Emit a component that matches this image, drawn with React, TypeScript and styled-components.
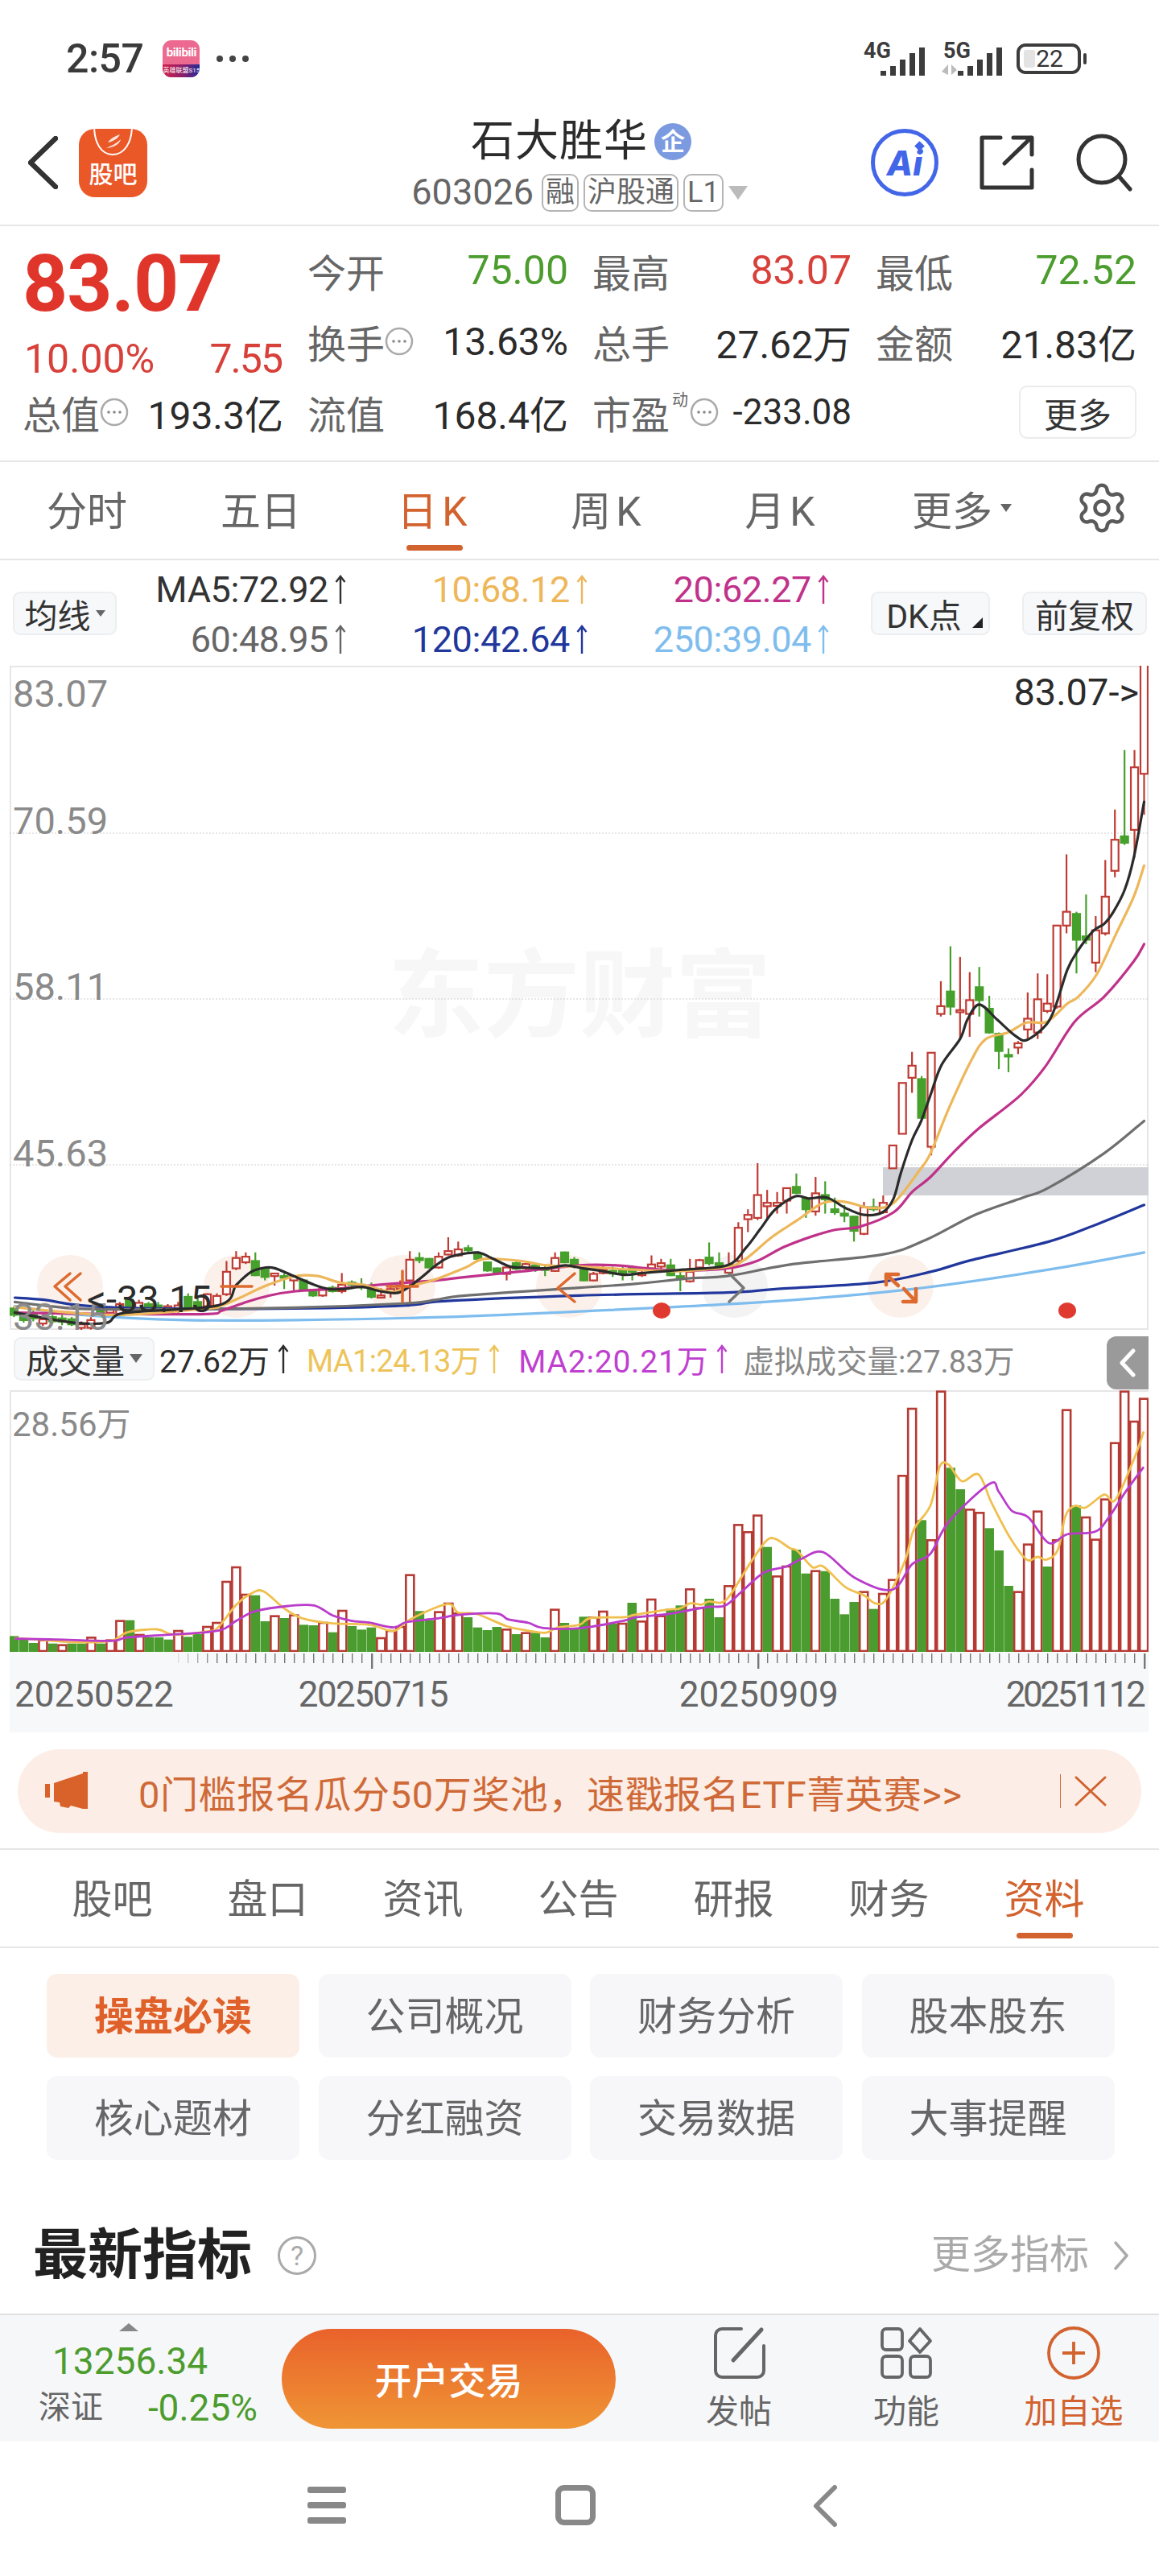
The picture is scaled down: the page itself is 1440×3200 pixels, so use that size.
import React from 'react';
import styled, { createGlobalStyle } from 'styled-components';
import { Settings } from 'lucide-react';

const RED = '#d8403a';
const GREEN = '#4c9c2e';
const ORANGE = '#d2622e';
const CANDLE_RED = '#bf3b33';
const CANDLE_GREEN = '#46a02c';

type Point = [number, number];
// x, body top, body bottom, wick top, wick bottom, up day
type Candle = [number, number, number, number, number, boolean];

const leftCandles: Candle[] = [
  [38, 1485, 1500, 1480, 1505, false], [64, 1500, 1512, 1495, 1518, false], [90, 1498, 1508, 1490, 1515, false],
  [116, 1510, 1520, 1500, 1526, true], [142, 1505, 1515, 1500, 1520, false], [168, 1508, 1516, 1500, 1524, false],
  [194, 1510, 1522, 1505, 1526, false], [220, 1522, 1530, 1515, 1535, true], [246, 1512, 1530, 1505, 1534, true],
  [272, 1490, 1500, 1485, 1505, false], [298, 1488, 1495, 1480, 1505, true], [324, 1475, 1500, 1470, 1505, true],
  [350, 1465, 1480, 1460, 1485, false], [376, 1472, 1490, 1465, 1495, true], [402, 1475, 1485, 1470, 1490, false],
  [428, 1478, 1488, 1470, 1492, false], [454, 1480, 1490, 1475, 1495, true], [482, 1478, 1490, 1470, 1495, true],
  [509, 1458, 1482, 1450, 1488, false], [535, 1470, 1482, 1462, 1486, false], [561, 1452, 1480, 1450, 1484, true],
  [587, 1456, 1478, 1450, 1482, true], [613, 1400, 1452, 1375, 1456, true], [639, 1368, 1392, 1352, 1396, true],
  [665, 1365, 1378, 1355, 1382, true], [691, 1375, 1408, 1355, 1410, false], [717, 1395, 1412, 1392, 1420, false],
  [743, 1404, 1410, 1404, 1432, true], [769, 1410, 1414, 1404, 1440, false], [795, 1410, 1420, 1408, 1444, true],
  [821, 1420, 1440, 1418, 1442, false], [847, 1442, 1455, 1440, 1458, false], [873, 1440, 1455, 1438, 1458, true],
  [900, 1437, 1445, 1432, 1448, false], [925, 1430, 1445, 1403, 1450, true], [952, 1425, 1430, 1420, 1440, false],
  [978, 1430, 1436, 1415, 1442, false], [1005, 1442, 1458, 1425, 1462, false], [1031, 1455, 1460, 1438, 1462, true],
  [1057, 1440, 1448, 1430, 1460, true], [1083, 1432, 1440, 1420, 1446, true], [1109, 1372, 1420, 1352, 1470, true],
  [1135, 1368, 1373, 1355, 1380, false], [1161, 1370, 1390, 1368, 1392, false], [1187, 1365, 1390, 1355, 1393, true],
  [1213, 1352, 1360, 1320, 1362, true], [1240, 1348, 1362, 1330, 1365, true], [1267, 1345, 1350, 1338, 1358, false],
  [1293, 1358, 1370, 1352, 1376, false], [1319, 1378, 1397, 1376, 1400, false], [1345, 1392, 1402, 1390, 1405, false],
  [1371, 1390, 1405, 1388, 1420, true], [1397, 1380, 1393, 1375, 1396, false], [1423, 1382, 1392, 1380, 1396, true],
  [1449, 1385, 1392, 1382, 1400, false], [1475, 1392, 1396, 1384, 1410, false], [1502, 1368, 1398, 1355, 1400, true],
  [1528, 1355, 1378, 1353, 1380, false], [1554, 1372, 1385, 1366, 1392, false],
];

const rightCandles: Candle[] = [
  [12, 1395, 1420, 1392, 1422, false], [38, 1405, 1420, 1400, 1422, true], [64, 1395, 1403, 1385, 1406, true],
  [90, 1398, 1404, 1388, 1412, false], [117, 1395, 1402, 1384, 1420, false], [143, 1390, 1400, 1385, 1420, false],
  [169, 1402, 1408, 1392, 1412, true], [195, 1383, 1392, 1362, 1400, true], [221, 1380, 1388, 1370, 1395, true],
  [247, 1385, 1408, 1370, 1410, false], [273, 1410, 1414, 1400, 1445, false], [299, 1400, 1422, 1370, 1425, true],
  [325, 1373, 1390, 1370, 1395, true], [351, 1367, 1380, 1332, 1385, false], [378, 1380, 1390, 1355, 1392, false],
  [404, 1390, 1402, 1355, 1405, true], [430, 1298, 1375, 1285, 1378, true], [456, 1268, 1278, 1255, 1308, true],
  [482, 1222, 1275, 1148, 1280, true], [508, 1240, 1248, 1210, 1280, true], [535, 1240, 1247, 1215, 1265, true],
  [561, 1206, 1235, 1206, 1265, true], [587, 1203, 1217, 1172, 1220, false], [613, 1230, 1255, 1225, 1275, false],
  [639, 1218, 1260, 1180, 1270, true], [665, 1222, 1232, 1190, 1265, false], [691, 1255, 1262, 1228, 1268, false],
  [717, 1265, 1270, 1245, 1285, false], [743, 1272, 1305, 1270, 1330, false], [770, 1250, 1312, 1238, 1315, true],
  [796, 1250, 1255, 1230, 1260, false], [822, 1240, 1262, 1223, 1265, true], [848, 1107, 1160, 1107, 1160, true],
  [874, 962, 1080, 962, 1080, true], [900, 922, 950, 890, 985, true], [926, 953, 1043, 946, 1045, false],
  [952, 892, 1110, 892, 1130, true], [978, 784, 802, 726, 808, true], [1004, 750, 785, 645, 805, false],
  [1030, 793, 798, 670, 860, true], [1056, 770, 802, 705, 855, true], [1082, 740, 770, 693, 808, false],
  [1109, 790, 845, 760, 848, false], [1135, 848, 888, 845, 930, false], [1161, 897, 900, 882, 937, false],
  [1187, 870, 880, 865, 895, true], [1213, 813, 838, 752, 862, true], [1240, 768, 845, 708, 860, true],
  [1266, 778, 795, 710, 800, true], [1292, 597, 785, 597, 790, true], [1318, 565, 597, 432, 615, true],
  [1345, 570, 630, 565, 708, false], [1371, 622, 630, 525, 640, false], [1397, 608, 683, 575, 705, true],
  [1423, 530, 615, 445, 620, true], [1449, 398, 470, 328, 485, true], [1475, 390, 405, 190, 410, false],
  [1502, 230, 375, 190, 440, true], [1528, -10, 245, -10, 340, true],
];

const candles: Candle[] = [
  ...leftCandles,
  ...rightCandles.map(([x, ...rest]) => [x + 1568, ...rest] as Candle),
];

const shift = (points: Point[]): Point[] => points.map(([x, y]) => [x + 1568, y]);

const maLines: { color: string; points: Point[] }[] = [
  {
    color: '#7ebdee',
    points: [[40, 1480], [220, 1500], [500, 1512], [800, 1512], [1200, 1505], [1568, 1492],
      ...shift([[500, 1470], [900, 1440], [1270, 1395], [1528, 1355]])],
  },
  {
    color: '#21379c',
    points: [[40, 1460], [120, 1465], [220, 1478], [400, 1485], [800, 1485], [1100, 1478], [1200, 1468], [1568, 1455],
      ...shift([[400, 1448], [530, 1440], [800, 1425], [950, 1400], [1060, 1373], [1270, 1330], [1400, 1290], [1528, 1245]])],
  },
  {
    color: '#6f6f6f',
    points: [[40, 1470], [200, 1485], [400, 1487], [800, 1483], [1100, 1473], [1180, 1465], [1260, 1455], [1568, 1437],
      ...shift([[150, 1428], [300, 1415], [400, 1410], [580, 1382], [820, 1360], [940, 1325], [1070, 1268], [1200, 1228], [1270, 1205], [1420, 1125], [1528, 1050]])],
  },
  {
    color: '#c0328a',
    points: [[40, 1495], [300, 1498], [560, 1498], [600, 1490], [660, 1472], [730, 1455], [800, 1445], [900, 1440], [1000, 1432], [1100, 1425], [1180, 1420], [1260, 1412], [1400, 1400], [1568, 1385],
      ...shift([[100, 1385], [160, 1390], [270, 1397], [400, 1392], [480, 1375], [560, 1340], [680, 1305], [760, 1295], [850, 1262], [900, 1215], [950, 1180], [1010, 1125], [1080, 1068], [1190, 993], [1260, 925], [1340, 820], [1420, 762], [1500, 680], [1528, 640]])],
  },
  {
    color: '#edb75a',
    points: [[40, 1482], [300, 1500], [560, 1485], [600, 1478], [650, 1460], [720, 1432], [800, 1410], [860, 1410], [920, 1425], [980, 1430], [1060, 1447], [1100, 1435], [1170, 1420], [1260, 1390], [1310, 1370], [1410, 1375], [1480, 1385], [1568, 1388],
      ...shift([[100, 1393], [200, 1397], [280, 1398], [400, 1388], [450, 1370], [520, 1320], [590, 1280], [660, 1240], [720, 1238], [790, 1252], [850, 1240], [920, 1165], [950, 1125], [1000, 1020], [1060, 910], [1100, 860], [1160, 845], [1210, 822], [1265, 820], [1320, 778], [1350, 762], [1400, 710], [1450, 620], [1500, 530], [1528, 458]])],
  },
  {
    color: '#2b2b2b',
    points: [[40, 1495], [200, 1518], [290, 1518], [340, 1495], [590, 1478], [640, 1430], [680, 1400], [720, 1390], [745, 1392], [790, 1408], [850, 1430], [890, 1440], [930, 1440], [980, 1435], [1030, 1445], [1080, 1448], [1130, 1420], [1180, 1385], [1220, 1365], [1290, 1355], [1330, 1368], [1380, 1388], [1420, 1390], [1480, 1392], [1530, 1385],
      ...shift([[10, 1392], [60, 1398], [120, 1407], [170, 1403], [240, 1398], [280, 1395], [400, 1385], [450, 1345], [490, 1300], [530, 1255], [585, 1225], [620, 1230], [670, 1228], [720, 1252], [770, 1268], [820, 1262], [850, 1230], [870, 1170], [900, 1095], [925, 1050], [950, 990], [980, 920], [1030, 860], [1050, 815], [1082, 780], [1130, 815], [1180, 853], [1212, 862], [1265, 825], [1290, 780], [1320, 700], [1345, 660], [1390, 610], [1420, 593], [1445, 565], [1475, 515], [1500, 440], [1528, 310]])],
  },
];

// top of each volume bar, oldest first; g = down day, r = up day
const volumeTops: [number, 'r' | 'g'][] = [
  [1117, 'g'], [1130, 'g'], [1143, 'g'], [1130, 'r'], [1145, 'g'], [1148, 'r'], [1145, 'g'], [1145, 'g'], [1120, 'r'], [1145, 'g'],
  [1130, 'r'], [1058, 'r'], [1058, 'g'], [1110, 'r'], [1122, 'g'], [1122, 'g'], [1130, 'g'], [1095, 'r'], [1120, 'g'], [1110, 'g'],
  [1080, 'r'], [1065, 'r'], [912, 'r'], [858, 'r'], [960, 'r'], [965, 'g'], [1062, 'g'], [1040, 'r'], [1050, 'g'], [1037, 'r'],
  [1075, 'g'], [1077, 'g'], [1065, 'r'], [1103, 'g'], [1020, 'r'], [1080, 'g'], [1093, 'g'], [1085, 'g'], [1122, 'r'], [1095, 'r'],
  [1080, 'r'], [887, 'r'], [1024, 'g'], [1058, 'g'], [1025, 'r'], [993, 'r'], [1030, 'r'], [1047, 'g'], [1085, 'g'], [1095, 'g'],
  [1083, 'g'], [1090, 'r'], [1110, 'g'], [1103, 'r'], [1105, 'g'], [1122, 'g'], [1016, 'r'], [1068, 'g'], [1090, 'g'],
  [1045, 'g'], [1045, 'r'], [1023, 'r'], [1070, 'g'], [1068, 'r'], [993, 'g'], [1060, 'r'], [978, 'r'], [1040, 'r'], [1015, 'g'],
  [1003, 'g'], [940, 'r'], [1010, 'r'], [978, 'g'], [1047, 'g'], [928, 'r'], [700, 'r'], [727, 'r'], [665, 'r'], [785, 'g'],
  [892, 'r'], [855, 'r'], [795, 'g'], [884, 'g'], [872, 'r'], [875, 'g'], [978, 'g'], [1036, 'g'], [990, 'g'], [950, 'r'],
  [1016, 'g'], [957, 'r'], [905, 'r'], [517, 'r'], [267, 'r'], [685, 'g'], [757, 'r'], [203, 'r'], [490, 'g'], [570, 'g'],
  [643, 'r'], [655, 'r'], [715, 'g'], [798, 'g'], [930, 'g'], [950, 'r'], [773, 'r'], [650, 'r'], [858, 'g'], [757, 'r'],
  [272, 'r'], [630, 'g'], [672, 'r'], [755, 'r'], [605, 'r'], [395, 'r'], [203, 'r'], [315, 'r'], [230, 'r'],
];

const volumeMa1: Point[] = [[40, 1125], [100, 1130], [200, 1140], [300, 1135], [345, 1103], [425, 1092], [470, 1112], [560, 1100], [590, 1085], [640, 1000], [685, 955], [715, 952], [770, 1015], [820, 1052], [900, 1070], [1000, 1075], [1065, 1098], [1110, 1055], [1210, 998], [1240, 1030], [1290, 1035], [1370, 1080], [1420, 1095], [1475, 1105], [1510, 1085], [1568, 1075],
  ...shift([[30, 1050], [120, 1047], [150, 1038], [240, 1018], [270, 1015], [300, 995], [330, 1000], [350, 988], [385, 992], [410, 960], [460, 850], [505, 763], [530, 755], [570, 790], [590, 800], [630, 860], [660, 858], [720, 935], [770, 965], [800, 995], [830, 980], [880, 840], [905, 720], [950, 630], [975, 485], [1000, 480], [1035, 540], [1080, 515], [1115, 620], [1165, 750], [1210, 832], [1240, 822], [1265, 832], [1295, 795], [1315, 670], [1340, 632], [1370, 638], [1420, 590], [1450, 610], [1500, 460], [1527, 355]])];

const volumeMa2: Point[] = [[40, 1127], [150, 1130], [300, 1135], [345, 1122], [460, 1112], [590, 1097], [640, 1060], [690, 1025], [780, 1005], [850, 1003], [900, 1040], [950, 1060], [1000, 1067], [1065, 1085], [1100, 1065], [1180, 1052], [1250, 1037], [1345, 1033], [1375, 1055], [1430, 1068], [1470, 1087], [1568, 1088],
  ...shift([[120, 1060], [150, 1048], [240, 1035], [300, 1020], [350, 1008], [395, 1003], [440, 950], [500, 880], [560, 858], [600, 830], [660, 805], [745, 900], [845, 945], [900, 850], [950, 810], [1000, 690], [1110, 550], [1135, 580], [1170, 650], [1215, 675], [1270, 770], [1320, 738], [1395, 728], [1430, 680], [1480, 575], [1527, 487]])];

// samples were read at 2.178x / 1.867x around y=830, the panel starts at (12, 827)
const kx = (z: number) => z / 2.178 - 12;
const ky = (z: number) => z / 1.867 + 3;
const vx = (z: number) => z / 2.178 - 12;
const vy = (z: number) => z / 3 - 67;

function smoothPath(points: Point[]) {
  let d = `M${points[0][0].toFixed(1)} ${points[0][1].toFixed(1)}`;
  for (let i = 0; i < points.length - 1; i++) {
    const p0 = points[Math.max(i - 1, 0)];
    const p1 = points[i];
    const p2 = points[i + 1];
    const p3 = points[Math.min(i + 2, points.length - 1)];
    const c1x = p1[0] + (p2[0] - p0[0]) / 6;
    const c1y = p1[1] + (p2[1] - p0[1]) / 6;
    const c2x = p2[0] - (p3[0] - p1[0]) / 6;
    const c2y = p2[1] - (p3[1] - p1[1]) / 6;
    d += ` C${c1x.toFixed(1)} ${c1y.toFixed(1)} ${c2x.toFixed(1)} ${c2y.toFixed(1)} ${p2[0].toFixed(1)} ${p2[1].toFixed(1)}`;
  }
  return d;
}

const priceLabels: [string, number][] = [['83.07', 10], ['70.59', 168], ['58.11', 374], ['45.63', 581]];
const chartButtons: [number, string][] = [[75, '#fbf0ea'], [282, '#fbf0ea'], [488, '#fbf0ea'], [695, '#fbf0ea'], [901, '#f3f3f4'], [1107, '#fbf0ea']];
const quoteTabs = ['股吧', '盘口', '资讯', '公告', '研报', '财务', '资料'];
const profileLinks = ['操盘必读', '公司概况', '财务分析', '股本股东', '核心题材', '分红融资', '交易数据', '大事提醒'];
const periodTabs = ['分时', '五日', '日K', '周K', '月K'];

const GlobalStyle = createGlobalStyle`
  html, body {
    margin: 0;
    padding: 0;
    background: #fff;
  }

  * {
    box-sizing: border-box;
  }

  body {
    font-family: Roboto, "Noto Sans CJK SC", sans-serif;
    color: #333;
  }
`;

const Page = styled.div`
  width: 1440px;
  height: 3200px;
  overflow: hidden;
  background: #fff;
`;

const StatusBar = styled.div`
  height: 140px;
  padding: 6px 97px 0 82px;
  display: flex;
  align-items: center;
  justify-content: space-between;
`;

const StatusLeft = styled.div`
  display: flex;
  align-items: center;
`;

const Time = styled.span`
  font-size: 50px;
  font-weight: 500;
  color: #3a3a3a;
  letter-spacing: -0.5px;
`;

const BiliIcon = styled.div`
  width: 46px;
  height: 46px;
  margin-left: 24px;
  border-radius: 11px;
  overflow: hidden;
  display: flex;
  flex-direction: column;
  background: #ec6a90;
`;

const BiliTop = styled.span`
  height: 30px;
  display: flex;
  align-items: center;
  justify-content: center;
  font-size: 15px;
  font-weight: 700;
  color: #fff;
  letter-spacing: -0.4px;
`;

const BiliBottom = styled.span`
  flex: 1;
  display: flex;
  align-items: center;
  justify-content: center;
  font-size: 8px;
  line-height: 1;
  white-space: nowrap;
  color: #fff;
  background: linear-gradient(90deg, #d3224a, #8a1f6b 55%, #1f2a9a);
`;

const Dots = styled.div`
  margin-left: 21px;
  display: flex;
  gap: 8px;
`;

const Dot = styled.i`
  width: 8px;
  height: 8px;
  border-radius: 50%;
  background: #444;
`;

const StatusRight = styled.div`
  display: flex;
  align-items: center;
  gap: 18px;
`;

const SignalWrap = styled.div`
  position: relative;
  width: 78px;
  height: 42px;
`;

const SignalLabel = styled.span<{ $left: number }>`
  position: absolute;
  left: ${(p) => p.$left}px;
  top: -5px;
  font-size: 27px;
  line-height: 32px;
  font-weight: 700;
  color: #3c3c3c;
`;

const Battery = styled.div`
  position: relative;
  width: 80px;
  height: 38px;
  border: 4px solid #3c3c3c;
  border-radius: 11px;
  display: flex;
  align-items: center;
  justify-content: center;
  padding-left: 2px;
  font-size: 30px;
  line-height: 1;
  color: #333;
  margin-left: -2px;

  &::before {
    content: '';
    position: absolute;
    left: 5px;
    top: 4px;
    bottom: 4px;
    width: 14px;
    border-radius: 3px;
    background: #e3e3e3;
  }

  &::after {
    content: '';
    position: absolute;
    right: -11px;
    top: 8px;
    width: 4px;
    height: 14px;
    border-radius: 2px;
    background: #3c3c3c;
  }
`;

const BatteryValue = styled.span`
  position: relative;
`;

const Header = styled.header`
  height: 141px;
  padding-bottom: 18px;
  display: grid;
  grid-template-columns: 1fr auto 1fr;
  align-items: center;
  border-bottom: 2px solid #e6e6e6;
`;

const HeaderLeft = styled.div`
  display: flex;
  align-items: center;
  padding-left: 35px;
  gap: 26px;
`;

const Logo = styled.div`
  position: relative;
  width: 85px;
  height: 85px;
  border-radius: 20px;
  overflow: hidden;
  background: #eb5828;
  display: flex;
  align-items: flex-end;
  justify-content: center;
  padding-bottom: 9px;
`;

const LogoMark = styled.svg`
  position: absolute;
  left: 0;
  top: 0;
`;

const LogoText = styled.span`
  font-size: 30px;
  line-height: 38px;
  font-weight: 500;
  color: #fff;
`;

const HeaderCenter = styled.div`
  display: flex;
  flex-direction: column;
  align-items: center;
  padding-top: 6px;
  gap: 8px;
`;

const TitleRow = styled.div`
  display: flex;
  align-items: center;
  gap: 8px;
  margin-left: 4px;
`;

const Title = styled.h1`
  margin: 0;
  font-size: 54px;
  line-height: 60px;
  font-weight: 400;
  letter-spacing: 1px;
  color: #2b2b2b;
`;

const TitleBadge = styled.span`
  width: 46px;
  height: 46px;
  border-radius: 50%;
  background: #7b9ae0;
  color: #fff;
  font-size: 30px;
  font-weight: 700;
  line-height: 46px;
  text-align: center;
`;

const CodeRow = styled.div`
  display: flex;
  align-items: center;
  gap: 6px;
`;

const Code = styled.span`
  font-size: 45px;
  line-height: 50px;
  color: #666;
  margin-right: 4px;
`;

const CodeTag = styled.span`
  height: 47px;
  padding: 0 3px;
  border: 2px solid #b5b5b5;
  border-radius: 10px;
  font-size: 36px;
  line-height: 42px;
  color: #666;
`;

const DownTriangle = styled.i<{ $size: number; $color: string }>`
  display: inline-block;
  width: 0;
  height: 0;
  border-left: ${(p) => p.$size}px solid transparent;
  border-right: ${(p) => p.$size}px solid transparent;
  border-top: ${(p) => Math.round(p.$size * 1.4)}px solid ${(p) => p.$color};
`;

const HeaderRight = styled.div`
  display: flex;
  align-items: center;
  justify-content: flex-end;
  padding-right: 33px;
`;

const AiBadge = styled.div`
  position: relative;
  width: 84px;
  height: 84px;
  border: 5px solid #4366e8;
  border-radius: 50%;
  display: flex;
  align-items: center;
  justify-content: center;
  font-family: Inter, Roboto, sans-serif;
  font-size: 42px;
  font-weight: 800;
  font-style: italic;
  color: #4366e8;
  margin-right: 51px;

  &::after {
    content: '';
    position: absolute;
    right: 14px;
    top: 12px;
    width: 9px;
    height: 9px;
    transform: rotate(45deg);
    background: #4366e8;
  }
`;

const ShareIcon = styled.svg`
  margin-right: 52px;
`;

const QuoteSection = styled.section`
  height: 293px;
  padding: 11px 26px 0 30px;
  display: grid;
  grid-template-columns: 322px 322px 320px 322px;
  grid-auto-rows: 88px;
  column-gap: 32px;
  border-bottom: 2px solid #e6e6e6;
`;

const PriceBlock = styled.div`
  grid-row: 1 / 3;
  display: flex;
  flex-direction: column;
`;

const BigPrice = styled.div`
  height: 112px;
  margin: 5px 0 0 -2px;
  font-size: 98px;
  line-height: 112px;
  font-weight: 700;
  letter-spacing: -1px;
  color: #e0352b;
`;

const PriceChange = styled.div`
  display: flex;
  justify-content: space-between;
  margin-top: 5px;
  font-size: 50px;
  line-height: 64px;
  color: ${RED};
`;

const PriceDelta = styled.span`
  letter-spacing: -2px;
  margin-right: 2px;
`;

const Stat = styled.div`
  display: flex;
  align-items: center;
  justify-content: space-between;
`;

const StatLabel = styled.span`
  display: flex;
  align-items: center;
  font-size: 48px;
  color: #666;
  margin-left: -2px;
`;

const Superscript = styled.sup`
  font-size: 20px;
  line-height: 1;
  align-self: flex-start;
  margin: 10px 2px 0 3px;
  color: #666;
`;

const StatValue = styled.span<{ $color?: string; $size?: number }>`
  font-size: ${(p) => p.$size || 48}px;
  color: ${(p) => p.$color || '#2b2b2b'};
`;

const MoreButton = styled.button`
  width: 146px;
  height: 66px;
  margin: auto 0 auto auto;
  border: 2px solid #ececee;
  border-radius: 10px;
  background: #fff;
  font-family: inherit;
  font-size: 42px;
  color: #333;
`;

const PeriodTabs = styled.nav`
  height: 122px;
  display: flex;
  align-items: center;
  border-bottom: 2px solid #e6e6e6;
`;

const Tab = styled.div<{ $active?: boolean; $width: number; $spread?: boolean; $inset?: number }>`
  position: relative;
  flex: 0 0 ${(p) => p.$width}px;
  height: 100%;
  padding: 0 0 6px ${(p) => p.$inset || 0}px;
  display: flex;
  align-items: center;
  justify-content: center;
  gap: 10px;
  font-size: 50px;
  letter-spacing: ${(p) => (p.$spread ? 6 : 0)}px;
  color: ${(p) => (p.$active ? ORANGE : '#666')};

  &::after {
    content: '';
    display: ${(p) => (p.$active ? 'block' : 'none')};
    position: absolute;
    left: 50%;
    bottom: 10px;
    width: 70px;
    height: 7px;
    margin-left: -35px;
    border-radius: 4px;
    background: ${ORANGE};
  }
`;

const Gear = styled.div`
  flex: 1;
  display: flex;
  justify-content: center;
  color: #5a5a5a;
  padding: 0 0 6px 2px;
`;

const IndicatorBar = styled.div`
  height: 131px;
  padding: 0 15px 0 16px;
  display: flex;
  align-items: center;
`;

const ToolButton = styled.div<{ $width: number; $pullLeft?: number }>`
  position: relative;
  width: ${(p) => p.$width}px;
  height: 54px;
  padding-right: ${(p) => p.$pullLeft || 0}px;
  border: 2px solid #eceef0;
  border-radius: 9px;
  background: #f7f8fa;
  display: flex;
  align-items: center;
  justify-content: center;
  gap: 6px;
  font-size: 41px;
  color: #333;
`;

const CornerMark = styled.i`
  position: absolute;
  right: 7px;
  bottom: 7px;
  width: 0;
  height: 0;
  border-bottom: 13px solid #222;
  border-left: 13px solid transparent;
`;

const MaGrid = styled.div`
  flex: 0 0 885px;
  display: grid;
  grid-template-columns: repeat(3, 300px);
  grid-auto-rows: 62px;
  margin-left: -15px;
  padding-top: 3px;
`;

const MaItem = styled.span<{ $color: string }>`
  display: flex;
  align-items: center;
  justify-content: flex-end;
  gap: 8px;
  font-size: 45px;
  letter-spacing: -0.4px;
  color: ${(p) => p.$color};
`;

const ToolGroup = styled.div`
  display: flex;
  gap: 40px;
  margin-left: 52px;
`;

const ChartPanel = styled.div`
  position: relative;
  width: 1415px;
  height: 825px;
  margin-left: 12px;
  border: 2px solid #e6e6e8;
`;

const Watermark = styled.div`
  position: absolute;
  left: 468px;
  top: 340px;
  font-size: 119px;
  line-height: 140px;
  font-weight: 700;
  color: #f7f7f7;
  white-space: nowrap;
`;

const ChartSvg = styled.svg`
  position: absolute;
  left: -2px;
  top: -2px;
  overflow: hidden;
`;

const AxisPrice = styled.span<{ $top: number }>`
  position: absolute;
  left: 2px;
  top: ${(p) => p.$top}px;
  font-size: 47px;
  line-height: 46px;
  color: #8a8a8a;
`;

const ChartNote = styled.span<{ $left?: number; $right?: number; $top: number }>`
  position: absolute;
  ${(p) => (p.$left !== undefined ? `left: ${p.$left}px;` : '')}
  ${(p) => (p.$right !== undefined ? `right: ${p.$right}px;` : '')}
  top: ${(p) => p.$top}px;
  font-size: 47px;
  line-height: 46px;
  color: #2b2b2b;
  white-space: nowrap;
`;

const VolumeHeader = styled.div`
  position: relative;
  height: 75px;
  padding: 0 0 4px 17px;
  display: flex;
  align-items: center;
`;

const VolumeValue = styled.span<{ $color: string; $gap: number; $size: number; $spacing?: number }>`
  display: flex;
  align-items: center;
  gap: 10px;
  margin-left: ${(p) => p.$gap}px;
  font-size: ${(p) => p.$size}px;
  letter-spacing: ${(p) => p.$spacing || 0}px;
  color: ${(p) => p.$color};
`;

const CollapseTab = styled.div`
  position: absolute;
  right: 13px;
  top: 8px;
  width: 52px;
  height: 66px;
  border-radius: 12px 0 0 12px;
  background: #9a9a9a;
  display: flex;
  align-items: center;
  justify-content: center;
`;

const VolumePanel = styled.div`
  position: relative;
  width: 1415px;
  height: 325px;
  margin-left: 12px;
  border-top: 2px solid #e6e6e8;
  border-left: 2px solid #e6e6e8;
`;

const VolumeSvg = styled.svg`
  display: block;
  margin: -2px 0 0 -2px;
`;

const VolumeLabel = styled.span`
  position: absolute;
  left: 1px;
  top: 16px;
  font-size: 42px;
  line-height: 50px;
  color: #8a8a8a;
`;

const DateAxis = styled.div`
  width: 1415px;
  height: 100px;
  margin-left: 12px;
  background: #f7f8fa;
`;

const TickSvg = styled.svg`
  display: block;
`;

const DateRow = styled.div`
  display: flex;
  margin-top: 1px;
`;

const DateLabel = styled.span<{ $gap: number; $spacing: number }>`
  margin-left: ${(p) => p.$gap}px;
  font-size: 44px;
  line-height: 56px;
  letter-spacing: ${(p) => p.$spacing}px;
  color: #666;
`;

const BannerWrap = styled.div`
  height: 146px;
  padding: 21px 22px;
  border-bottom: 2px solid #e6e6e6;
`;

const Banner = styled.div`
  height: 104px;
  padding: 0 43px 0 34px;
  border-radius: 52px;
  background: #fceee6;
  display: flex;
  align-items: center;
`;

const BannerText = styled.span`
  flex: 1;
  margin-left: 62px;
  font-size: 47px;
  letter-spacing: 0.6px;
  color: #cf6a38;
  white-space: nowrap;
`;

const BannerDivider = styled.i`
  width: 1px;
  height: 42px;
  background: #cf6a38;
  margin-right: 17px;
`;

const InfoTabs = styled.nav`
  height: 122px;
  padding-left: 43px;
  display: flex;
  border-bottom: 2px solid #e6e6e6;
`;

const ProfileGrid = styled.div`
  height: 280px;
  padding: 32px 57px 0 58px;
  display: grid;
  grid-template-columns: repeat(4, 314px);
  grid-auto-rows: 104px;
  column-gap: 23.5px;
  row-gap: 23px;
`;

const ProfileLink = styled.a<{ $active?: boolean }>`
  display: flex;
  align-items: center;
  justify-content: center;
  padding-bottom: 7px;
  border-radius: 13px;
  font-size: 49px;
  font-weight: ${(p) => (p.$active ? 700 : 400)};
  color: ${(p) => (p.$active ? '#e0602a' : '#666')};
  background: ${(p) => (p.$active ? '#fcefe8' : '#f7f7f9')};
`;

const SectionHead = styled.div`
  height: 176px;
  padding: 70px 37px 0 41px;
  display: flex;
  align-items: flex-start;
  justify-content: space-between;
  border-bottom: 2px solid #e0e0e0;
`;

const SectionTitle = styled.div`
  display: flex;
  align-items: center;
  gap: 32px;
`;

const Heading = styled.h2`
  margin: 0;
  font-size: 68px;
  line-height: 64px;
  font-weight: 700;
  color: #222;
`;

const HelpCircle = styled.span`
  width: 48px;
  height: 48px;
  border: 3px solid #aaa;
  border-radius: 50%;
  display: flex;
  align-items: center;
  justify-content: center;
  font-size: 34px;
  color: #aaa;
`;

const MoreLink = styled.a`
  display: flex;
  align-items: center;
  gap: 30px;
  font-size: 49px;
  line-height: 64px;
  color: #aaa;
`;

const ActionBar = styled.div`
  position: relative;
  height: 157px;
  background: #f6f7f9;
  display: flex;
  align-items: center;
`;

const IndexBlock = styled.div`
  flex: 0 0 350px;
  padding: 0 30px 0 48px;
`;

const UpTriangle = styled.i`
  position: absolute;
  left: 148px;
  top: 10px;
  width: 0;
  height: 0;
  border-left: 12px solid transparent;
  border-right: 12px solid transparent;
  border-bottom: 10px solid #888;
`;

const IndexValue = styled.div`
  font-size: 46px;
  line-height: 56px;
  color: ${GREEN};
  padding-left: 17px;
  margin-top: 14px;
`;

const IndexRow = styled.div`
  display: flex;
  align-items: center;
  justify-content: space-between;
  margin-top: 2px;
`;

const IndexName = styled.span`
  font-size: 40px;
  line-height: 56px;
  color: #666;
`;

const IndexChange = styled.span`
  font-size: 46px;
  line-height: 56px;
  color: ${GREEN};
`;

const OpenButton = styled.button`
  flex: 0 0 415px;
  height: 124px;
  padding-bottom: 3px;
  border: 0;
  border-radius: 62px;
  background: linear-gradient(180deg, #e9622b, #ef9535);
  font-family: inherit;
  font-size: 46px;
  font-weight: 500;
  color: #fff;
`;

const Actions = styled.div`
  margin-left: 49px;
  display: flex;
`;

const Action = styled.div<{ $color?: string }>`
  width: 208px;
  display: flex;
  flex-direction: column;
  align-items: center;
  gap: 16px;
  font-size: 41px;
  line-height: 48px;
  color: ${(p) => p.$color || '#666'};
`;

const NavBar = styled.div`
  height: 166px;
  padding: 54px 0 0 382px;
  display: flex;
  align-items: flex-start;
`;

const MenuIcon = styled.div`
  width: 48px;
  height: 46px;
  display: flex;
  flex-direction: column;
  justify-content: space-between;
  margin-top: 2px;
`;

const MenuLine = styled.i`
  height: 8px;
  border-radius: 3px;
  background: #888;
`;

const HomeIcon = styled.div`
  width: 50px;
  height: 50px;
  margin-left: 260px;
  border: 7px solid #888;
  border-radius: 11px;
`;

const BackIcon = styled.svg`
  margin-left: 270px;
`;

function InfoDots() {
  return (
    <svg width="36" height="36" viewBox="0 0 36 36" fill="none">
      <circle cx="18" cy="18" r="16" stroke="#aaa" strokeWidth="2.5" />
      <circle cx="11" cy="18" r="1.8" fill="#888" />
      <circle cx="18" cy="18" r="1.8" fill="#888" />
      <circle cx="25" cy="18" r="1.8" fill="#888" />
    </svg>
  );
}

function UpArrow({ height = 36 }: { height?: number }) {
  return (
    <svg width="14" height={height} viewBox={`0 0 14 ${height}`} fill="none" stroke="currentColor" strokeWidth="2.4">
      <path d={`M7 1V${height}M1.5 9 7 2l5.5 7`} />
    </svg>
  );
}

function Signal({ label, arrows }: { label: string; arrows?: boolean }) {
  return (
    <SignalWrap>
      <SignalLabel $left={arrows ? 3 : 0}>{label}</SignalLabel>
      <svg width="78" height="42" viewBox="0 0 78 42">
        {arrows && <path d="M9 28v13l-8-4zM13 28v13l7-6z" fill="#bbb" />}
        <path d="M21 36h7v6h-7zM33 30h7v12h-7zM45 22h7v20h-7zM57 14h7v28h-7zM69 7h7v35h-7z" fill="#3c3c3c" />
      </svg>
    </SignalWrap>
  );
}

function App() {
  const chartWidth = 1415;
  return (
    <Page>
      <GlobalStyle />
      <StatusBar>
        <StatusLeft>
          <Time>2:57</Time>
          <BiliIcon>
            <BiliTop>bilibili</BiliTop>
            <BiliBottom>英雄联盟S15</BiliBottom>
          </BiliIcon>
          <Dots>
            <Dot />
            <Dot />
            <Dot />
          </Dots>
        </StatusLeft>
        <StatusRight>
          <Signal label="4G" />
          <Signal label="5G" arrows />
          <Battery>
            <BatteryValue>22</BatteryValue>
          </Battery>
        </StatusRight>
      </StatusBar>

      <Header>
        <HeaderLeft>
          <svg width="37" height="66" viewBox="0 0 37 66" fill="none" stroke="#333" strokeWidth="6.5" strokeLinecap="round" strokeLinejoin="round">
            <path d="M34 3 3 33l31 30" />
          </svg>
          <Logo>
            <LogoMark width="85" height="85" viewBox="0 0 85 85" fill="none">
              <path d="M19 -4c0 22 9 36 23 36s24-14 24-36" stroke="#fff" strokeWidth="2" />
              <path d="M36 17c4-6 10-8 15-10-2 4-6 8-15 10zM34 24c6-3 12-5 18-11-1 5-7 10-18 11z" fill="#fff" opacity="0.85" />
            </LogoMark>
            <LogoText>股吧</LogoText>
          </Logo>
        </HeaderLeft>
        <HeaderCenter>
          <TitleRow>
            <Title>石大胜华</Title>
            <TitleBadge>企</TitleBadge>
          </TitleRow>
          <CodeRow>
            <Code>603026</Code>
            <CodeTag>融</CodeTag>
            <CodeTag>沪股通</CodeTag>
            <CodeTag>L1</CodeTag>
            <DownTriangle $size={12} $color="#bbb" />
          </CodeRow>
        </HeaderCenter>
        <HeaderRight>
          <AiBadge>Ai</AiBadge>
          <ShareIcon width="68" height="68" viewBox="0 0 68 68" fill="none" stroke="#333" strokeWidth="5" strokeLinecap="round" strokeLinejoin="round">
            <path d="M26 3H3v62h62V43M31 35 64 3M42 3h23v21" />
          </ShareIcon>
          <svg width="70" height="72" viewBox="0 0 70 72" fill="none" stroke="#333" strokeWidth="5" strokeLinecap="round">
            <circle cx="32" cy="32" r="29" />
            <path d="m54 54 13 15" />
          </svg>
        </HeaderRight>
      </Header>

      <QuoteSection>
        <PriceBlock>
          <BigPrice>83.07</BigPrice>
          <PriceChange>
            <span>10.00%</span>
            <PriceDelta>7.55</PriceDelta>
          </PriceChange>
        </PriceBlock>
        <Stat>
          <StatLabel>今开</StatLabel>
          <StatValue $color={GREEN} $size={50}>75.00</StatValue>
        </Stat>
        <Stat>
          <StatLabel>最高</StatLabel>
          <StatValue $color={RED} $size={50}>83.07</StatValue>
        </Stat>
        <Stat>
          <StatLabel>最低</StatLabel>
          <StatValue $color={GREEN} $size={50}>72.52</StatValue>
        </Stat>
        <Stat>
          <StatLabel>换手<InfoDots /></StatLabel>
          <StatValue>13.63%</StatValue>
        </Stat>
        <Stat>
          <StatLabel>总手</StatLabel>
          <StatValue>27.62万</StatValue>
        </Stat>
        <Stat>
          <StatLabel>金额</StatLabel>
          <StatValue>21.83亿</StatValue>
        </Stat>
        <Stat>
          <StatLabel>总值<InfoDots /></StatLabel>
          <StatValue>193.3亿</StatValue>
        </Stat>
        <Stat>
          <StatLabel>流值</StatLabel>
          <StatValue>168.4亿</StatValue>
        </Stat>
        <Stat>
          <StatLabel>市盈<Superscript>动</Superscript><InfoDots /></StatLabel>
          <StatValue $size={44}>-233.08</StatValue>
        </Stat>
        <MoreButton>更多</MoreButton>
      </QuoteSection>

      <PeriodTabs>
        {periodTabs.map((tab) => (
          <Tab key={tab} $width={216} $active={tab === '日K'} $spread={tab.endsWith('K')}>{tab}</Tab>
        ))}
        <Tab $width={216} $inset={14}>
          更多
          <DownTriangle $size={7} $color="#666" />
        </Tab>
        <Gear>
          <Settings size={68} strokeWidth={1.6} />
        </Gear>
      </PeriodTabs>

      <IndicatorBar>
        <ToolButton $width={129}>
          均线
          <DownTriangle $size={6} $color="#666" />
        </ToolButton>
        <MaGrid>
          <MaItem $color="#333">MA5:72.92<UpArrow /></MaItem>
          <MaItem $color="#edb75a">10:68.12<UpArrow /></MaItem>
          <MaItem $color="#c0328a">20:62.27<UpArrow /></MaItem>
          <MaItem $color="#666">60:48.95<UpArrow /></MaItem>
          <MaItem $color="#21379c">120:42.64<UpArrow /></MaItem>
          <MaItem $color="#7ebdee">250:39.04<UpArrow /></MaItem>
        </MaGrid>
        <ToolGroup>
          <ToolButton $width={148} $pullLeft={16}>
            DK点
            <CornerMark />
          </ToolButton>
          <ToolButton $width={155}>前复权</ToolButton>
        </ToolGroup>
      </IndicatorBar>

      <ChartPanel>
        <Watermark>东方财富</Watermark>
        <ChartSvg width={chartWidth} height="825" viewBox={`0 0 ${chartWidth} 825`} fill="none">
          <rect x="1085" y="623" width="330" height="35" fill="#d0d1d6" />
          {[208, 414, 620].map((y) => (
            <line key={y} x1="0" x2={chartWidth} y1={y} y2={y} stroke="#cfcfcf" strokeDasharray="2 2" />
          ))}
          {chartButtons.map(([x, color]) => (
            <ellipse key={x} cx={x} cy="771" rx="41" ry="39" fill={color} />
          ))}
          {candles.map(([x, top, bottom, wickTop, wickBottom, up]) => {
            const color = up ? CANDLE_RED : CANDLE_GREEN;
            return (
              <g key={x}>
                <line x1={kx(x)} x2={kx(x)} y1={ky(wickTop)} y2={ky(wickBottom)} stroke={color} strokeWidth="2.2" />
                <rect
                  x={kx(x) - 4.5}
                  y={ky(top)}
                  width="9"
                  height={Math.max(ky(bottom) - ky(top), 2)}
                  fill={up ? '#fff' : color}
                  stroke={color}
                  strokeWidth="2.2"
                />
              </g>
            );
          })}
          {maLines.map((line) => (
            <path
              key={line.color}
              d={smoothPath(line.points.map(([x, y]) => [kx(x), ky(y)] as Point))}
              stroke={line.color}
              strokeWidth="3.2"
              strokeLinecap="round"
            />
          ))}
          <g stroke="#dd6a2e" strokeWidth="3.5" strokeLinecap="round" strokeLinejoin="round">
            <path d="M75 755 56 771l19 17M88 755 69 771l19 17" />
            <path d="M263 771h38M469 771h38M488 752v38" />
            <path d="M702 755 681 773l21 17" />
            <path d="M1089 769v-13h15M1089 756l15 14M1126 774v16h-16M1126 790l-15-16" strokeWidth="4.5" />
          </g>
          <path d="M894 755 912 773 894 790" stroke="#777" strokeWidth="3.5" strokeLinecap="round" strokeLinejoin="round" />
          <ellipse cx="810" cy="801" rx="11" ry="10" fill="#e03a30" />
          <ellipse cx="1314" cy="801" rx="11" ry="10" fill="#e03a30" />
        </ChartSvg>
        {priceLabels.map(([label, top]) => (
          <AxisPrice key={label} $top={top}>{label}</AxisPrice>
        ))}
        <AxisPrice $top={784}>33.15</AxisPrice>
        <ChartNote $left={94} $top={762}>{'<-33.15'}</ChartNote>
        <ChartNote $right={10} $top={8}>{'83.07->'}</ChartNote>
      </ChartPanel>

      <VolumeHeader>
        <ToolButton $width={175}>
          成交量
          <DownTriangle $size={8} $color="#666" />
        </ToolButton>
        <VolumeValue $color="#2b2b2b" $gap={6} $size={39}>27.62万<UpArrow /></VolumeValue>
        <VolumeValue $color="#edc45a" $gap={22} $size={38} $spacing={-0.6}>MA1:24.13万<UpArrow /></VolumeValue>
        <VolumeValue $color="#bf3fd0" $gap={23} $size={39} $spacing={0.8}>MA2:20.21万<UpArrow /></VolumeValue>
        <VolumeValue $color="#888" $gap={19} $size={38.5}>虚拟成交量:27.83万</VolumeValue>
        <CollapseTab>
          <svg width="20" height="36" viewBox="0 0 20 36" fill="none" stroke="#fff" strokeWidth="5" strokeLinecap="round" strokeLinejoin="round">
            <path d="M17 3 3 18l14 15" />
          </svg>
        </CollapseTab>
      </VolumeHeader>

      <VolumePanel>
        <VolumeSvg width={chartWidth} height="325" viewBox={`0 0 ${chartWidth} 325`} fill="none">
          {volumeTops.map(([top, kind], i) => {
            const x = vx(38 + i * 26.13);
            const y = vy(top);
            return kind === 'r' ? (
              <rect key={i} x={x - 5} y={y + 1} width="10" height={323 - y} fill="#fff" stroke="#b63a33" strokeWidth="2.6" />
            ) : (
              <rect key={i} x={x - 5.8} y={y} width="11.6" height={325 - y} fill="#4a9c2e" />
            );
          })}
          <path d={smoothPath(volumeMa1.map(([x, y]) => [vx(x), vy(y)] as Point))} stroke="#f0c04f" strokeWidth="2.8" />
          <path d={smoothPath(volumeMa2.map(([x, y]) => [vx(x), vy(y)] as Point))} stroke="#b93ccb" strokeWidth="2.8" />
        </VolumeSvg>
        <VolumeLabel>28.56万</VolumeLabel>
      </VolumePanel>

      <DateAxis>
        <TickSvg width={chartWidth} height="24" viewBox={`0 0 ${chartWidth} 24`}>
          {Array.from({ length: 101 }, (_, i) => {
            const x = 209 + i * 12;
            const major = x === 449 || x === 929 || x === 1409;
            const opacity = i < 4 ? 0.2 + i * 0.2 : 1;
            return <rect key={i} x={x} y="2" width={major ? 2.4 : 1.4} height={major ? 19 : 12} fill="#777" opacity={opacity} />;
          })}
        </TickSvg>
        <DateRow>
          <DateLabel $gap={6} $spacing={0}>20250522</DateLabel>
          <DateLabel $gap={155} $spacing={-1.6}>20250715</DateLabel>
          <DateLabel $gap={288} $spacing={0}>20250909</DateLabel>
          <DateLabel $gap={208} $spacing={-3.4}>20251112</DateLabel>
        </DateRow>
      </DateAxis>

      <BannerWrap>
        <Banner>
          <svg width="54" height="48" viewBox="0 0 54 48" fill="#d9622b">
            <path d="M0 15h6v17H0zM11 14l36-12v44l-15-4-3 3-10-2-1-5-7-1zM47 0h6v46h-6z" />
          </svg>
          <BannerText>0门槛报名瓜分50万奖池，速戳报名ETF菁英赛&gt;&gt;</BannerText>
          <BannerDivider />
          <svg width="40" height="38" viewBox="0 0 40 38" fill="none" stroke={ORANGE} strokeWidth="3" strokeLinecap="round">
            <path d="M2 2 38 36M38 2 2 36" />
          </svg>
        </Banner>
      </BannerWrap>

      <InfoTabs>
        {quoteTabs.map((tab) => (
          <Tab key={tab} $width={193} $active={tab === '资料'}>{tab}</Tab>
        ))}
      </InfoTabs>

      <ProfileGrid>
        {profileLinks.map((link, i) => (
          <ProfileLink key={link} $active={i === 0}>{link}</ProfileLink>
        ))}
      </ProfileGrid>

      <SectionHead>
        <SectionTitle>
          <Heading>最新指标</Heading>
          <HelpCircle>?</HelpCircle>
        </SectionTitle>
        <MoreLink>
          更多指标
          <svg width="20" height="36" viewBox="0 0 20 36" fill="none" stroke="#aaa" strokeWidth="3.5" strokeLinecap="round" strokeLinejoin="round">
            <path d="M3 2 17 18 3 34" />
          </svg>
        </MoreLink>
      </SectionHead>

      <ActionBar>
        <UpTriangle />
        <IndexBlock>
          <IndexValue>13256.34</IndexValue>
          <IndexRow>
            <IndexName>深证</IndexName>
            <IndexChange>-0.25%</IndexChange>
          </IndexRow>
        </IndexBlock>
        <OpenButton>开户交易</OpenButton>
        <Actions>
          <Action>
            <svg width="66" height="66" viewBox="0 0 66 66" fill="none" stroke="#666" strokeWidth="4" strokeLinecap="round">
              <path d="M36 3H12a8 8 0 0 0-8 8v44a8 8 0 0 0 8 8h44a8 8 0 0 0 8-8V24" />
              <path d="M61 4 26 42" strokeWidth="5" />
            </svg>
            发帖
          </Action>
          <Action>
            <svg width="66" height="66" viewBox="0 0 66 66" fill="none" stroke="#666" strokeWidth="3.8" strokeLinejoin="round">
              <rect x="3" y="3" width="25" height="26" rx="5" />
              <path d="M50 3 63 18 50 32 37 18z" />
              <rect x="3" y="37" width="25" height="26" rx="5" />
              <rect x="38" y="37" width="25" height="26" rx="5" />
            </svg>
            功能
          </Action>
          <Action $color={ORANGE}>
            <svg width="66" height="66" viewBox="0 0 66 66" fill="none" stroke={ORANGE} strokeWidth="3.8">
              <circle cx="33" cy="33" r="31" />
              <path d="M33 19v28M19 33h28" />
            </svg>
            加自选
          </Action>
        </Actions>
      </ActionBar>

      <NavBar>
        <MenuIcon>
          <MenuLine />
          <MenuLine />
          <MenuLine />
        </MenuIcon>
        <HomeIcon />
        <BackIcon width="30" height="52" viewBox="0 0 30 52" fill="none" stroke="#888" strokeWidth="6" strokeLinecap="round" strokeLinejoin="round">
          <path d="M27 3 4 26l23 23" />
        </BackIcon>
      </NavBar>
    </Page>
  );
}

export default App;
